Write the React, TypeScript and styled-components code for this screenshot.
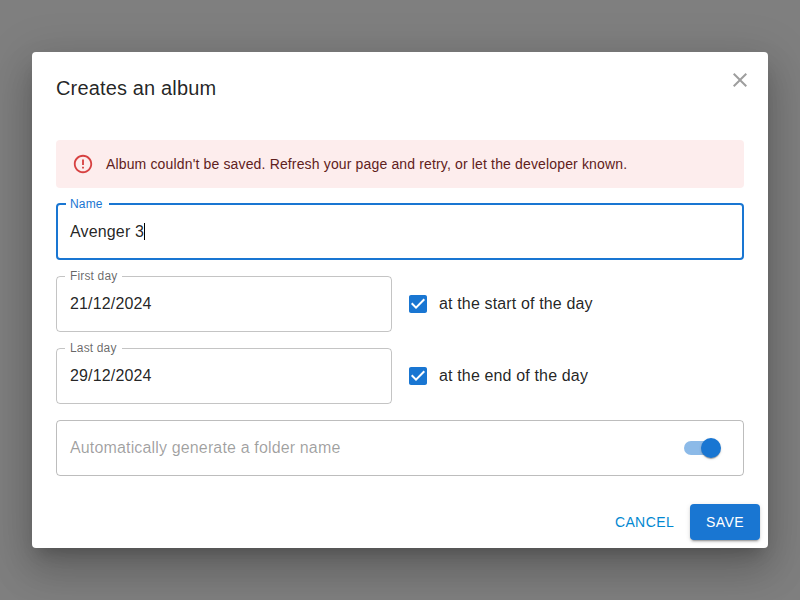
import React from "react";
import styled, { createGlobalStyle, css } from "styled-components";

const GlobalStyle = createGlobalStyle`
  *, *::before, *::after { box-sizing: border-box; }
  body {
    margin: 0;
    background: #fff;
    font-family: "Liberation Sans", Arial, sans-serif;
    font-size: 16px;
    line-height: 1.5;
    letter-spacing: 0.00938em;
    color: rgba(0, 0, 0, 0.87);
    overflow: hidden;
  }
`;

const Backdrop = styled.div`
  display: flex;
  align-items: center;
  justify-content: center;
  width: 100vw;
  height: 100vh;
  background: rgba(0, 0, 0, 0.5);
`;

const Dialog = styled.form`
  position: relative;
  display: flex;
  flex-direction: column;
  width: 736px;
  height: 496px;
  border-radius: 4px;
  background: #fff;
  box-shadow: 0 11px 15px -7px rgba(0, 0, 0, 0.2),
    0 24px 38px 3px rgba(0, 0, 0, 0.14), 0 9px 46px 8px rgba(0, 0, 0, 0.12);
`;

const Title = styled.h2`
  margin: 0;
  padding: 20px 24px 36px;
  font-size: 20px;
  font-weight: 400;
  line-height: 32px;
  letter-spacing: 0.0075em;
`;

const CloseButton = styled.button`
  position: absolute;
  top: 8px;
  right: 8px;
  display: flex;
  padding: 8px;
  border: 0;
  background: transparent;
  color: #9e9e9e;
`;

const Content = styled.div`
  display: flex;
  flex-direction: column;
  gap: 16px;
  padding: 0 24px;
`;

const Alert = styled.div`
  display: flex;
  align-items: center;
  height: 48px;
  padding: 0 16px;
  gap: 12px;
  border-radius: 4px;
  background: #fdeded;
  color: #5f2120;
  font-size: 14px;
  line-height: 20px;
  letter-spacing: 0.01071em;
`;

const AlertIcon = styled.svg`
  width: 22px;
  height: 22px;
  fill: #d32f2f;
  opacity: 0.9;
`;

const Icon = styled.svg`
  width: 24px;
  height: 24px;
  fill: currentColor;
`;

const FieldBox = styled.div`
  position: relative;
  display: flex;
  align-items: center;
  width: 100%;
  height: 56px;
  padding: 0 14px 1px;
  border-radius: 4px;
`;

const Outline = styled.fieldset<{ $focused?: boolean }>`
  position: absolute;
  inset: -5px 0 0;
  margin: 0;
  padding: 0 8px;
  border: 1px solid rgba(0, 0, 0, 0.23);
  border-radius: 4px;
  ${(p) =>
    p.$focused &&
    css`
      top: -6px;
      border: 2px solid #1976d2;
    `}
`;

const Notch = styled.legend`
  height: 11px;
  padding: 0 5px;
  font-size: 12px;
  line-height: 11px;
  visibility: hidden;
`;

const Label = styled.label<{ $focused?: boolean }>`
  position: absolute;
  top: -8px;
  left: 14px;
  font-size: 12px;
  line-height: 17.25px;
  color: ${(p) => (p.$focused ? "#1976d2" : "rgba(0, 0, 0, 0.6)")};
`;

const Value = styled.span`
  line-height: 23px;
`;

const Caret = styled.span`
  width: 1px;
  height: 17px;
  background: #000;
`;

const DateRow = styled.div`
  display: grid;
  grid-template-columns: 336px 1fr;
  column-gap: 5px;
  align-items: center;
`;

const CheckLabel = styled.label`
  display: flex;
  align-items: center;
  gap: 9px;
  padding-left: 9px;
`;

const CheckIcon = styled(Icon)`
  color: #1976d2;
`;

const FolderBox = styled.div`
  display: flex;
  align-items: center;
  justify-content: space-between;
  height: 56px;
  padding: 0 14px 0 13px;
  border: 1px solid rgba(0, 0, 0, 0.26);
  border-radius: 4px;
  color: rgba(0, 0, 0, 0.38);
`;

const Switch = styled.span`
  display: flex;
  align-items: center;
  justify-content: flex-end;
  width: 34px;
  height: 14px;
  margin-right: 11px;
  border-radius: 7px;
  background: #8cbae8;
`;

const Thumb = styled.span`
  flex: none;
  width: 20px;
  height: 20px;
  margin-right: -3px;
  border-radius: 50%;
  background: #1976d2;
  box-shadow: 0 2px 1px -1px rgba(0, 0, 0, 0.2), 0 1px 1px rgba(0, 0, 0, 0.14),
    0 1px 3px rgba(0, 0, 0, 0.12);
`;

const Actions = styled.div`
  display: flex;
  justify-content: flex-end;
  gap: 8px;
  margin-top: auto;
  padding: 8px;
`;

const Button = styled.button<{ $primary?: boolean }>`
  height: 36px;
  padding: 0 8px;
  border: 0;
  border-radius: 4px;
  background: transparent;
  color: #0288d1;
  font-family: inherit;
  font-size: 14px;
  line-height: 24.5px;
  letter-spacing: 0.02857em;
  text-transform: uppercase;
  ${(p) =>
    p.$primary &&
    css`
      padding: 0 16px;
      background: #1976d2;
      color: #fff;
      box-shadow: 0 3px 1px -2px rgba(0, 0, 0, 0.2),
        0 2px 2px rgba(0, 0, 0, 0.14), 0 1px 5px rgba(0, 0, 0, 0.12);
    `}
`;

type FieldProps = { label: string; value: string; focused?: boolean };

function Field({ label, value, focused }: FieldProps) {
  return (
    <FieldBox>
      <Outline $focused={focused} aria-hidden>
        <Notch>{label}</Notch>
      </Outline>
      <Label $focused={focused}>{label}</Label>
      <Value>{value}</Value>
      {focused && <Caret />}
    </FieldBox>
  );
}

function Check({ children }: { children: React.ReactNode }) {
  return (
    <CheckLabel>
      <CheckIcon viewBox="0 0 24 24">
        <path d="M19 3H5c-1.11 0-2 .9-2 2v14c0 1.1.89 2 2 2h14c1.11 0 2-.9 2-2V5c0-1.1-.89-2-2-2zm-9 14l-5-5 1.41-1.41L10 14.17l7.59-7.59L19 8l-9 9z" />
      </CheckIcon>
      <span>{children}</span>
    </CheckLabel>
  );
}

export default function App() {
  return (
    <>
      <GlobalStyle />
      <Backdrop>
        <Dialog>
          <Title>Creates an album</Title>
          <CloseButton type="button" aria-label="close">
            <Icon viewBox="0 0 24 24">
              <path d="M19 6.41 17.59 5 12 10.59 6.41 5 5 6.41 10.59 12 5 17.59 6.41 19 12 13.41 17.59 19 19 17.59 13.41 12z" />
            </Icon>
          </CloseButton>
          <Content>
            <Alert>
              <AlertIcon viewBox="0 0 24 24">
                <path d="M11 15h2v2h-2zm0-8h2v6h-2zm.99-5C6.47 2 2 6.48 2 12s4.47 10 9.99 10C17.52 22 22 17.52 22 12S17.52 2 11.99 2zM12 20c-4.42 0-8-3.58-8-8s3.58-8 8-8 8 3.58 8 8-3.58 8-8 8z" />
              </AlertIcon>
              <span>Album couldn't be saved. Refresh your page and retry, or let the developer known.</span>
            </Alert>
            <Field label="Name" value="Avenger 3" focused />
            <DateRow>
              <Field label="First day" value="21/12/2024" />
              <Check>at the start of the day</Check>
            </DateRow>
            <DateRow>
              <Field label="Last day" value="29/12/2024" />
              <Check>at the end of the day</Check>
            </DateRow>
            <FolderBox>
              <span>Automatically generate a folder name</span>
              <Switch role="switch" aria-checked="true">
                <Thumb />
              </Switch>
            </FolderBox>
          </Content>
          <Actions>
            <Button type="button">Cancel</Button>
            <Button type="button" $primary>Save</Button>
          </Actions>
        </Dialog>
      </Backdrop>
    </>
  );
}
